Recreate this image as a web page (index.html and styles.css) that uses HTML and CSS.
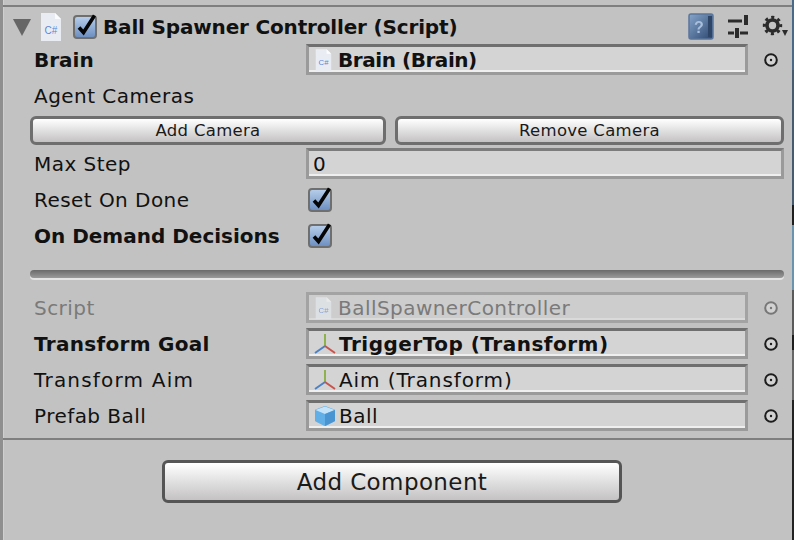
FILE: index.html
```html
<!DOCTYPE html>
<html lang="en">
<head>
  <meta charset="UTF-8">
  <title>Ball Spawner Controller</title>
  <link rel="stylesheet" href="styles.css">
</head>
<body>
  <svg class="defs" width="0" height="0">
    <defs>
      <linearGradient id="checkFill" x1="0" y1="0" x2="0" y2="1">
        <stop offset="0" stop-color="#b9d0ec"/>
        <stop offset="1" stop-color="#6a8dbf"/>
      </linearGradient>
      <linearGradient id="helpFill" x1="0" y1="0" x2="1" y2="1">
        <stop offset="0" stop-color="#86a5cb"/>
        <stop offset="1" stop-color="#2d4770"/>
      </linearGradient>
      <symbol id="check" viewBox="0 0 24 24" overflow="visible">
        <rect x="1" y="1" width="22" height="22" rx="3" fill="url(#checkFill)" stroke="#6f6f6f" stroke-width="2"/>
        <path d="M6 12.5l4.5 5L21.5 0.5" fill="none" stroke="#050505" stroke-width="3.6"/>
      </symbol>
      <symbol id="script" viewBox="0 0 22 28">
        <path d="M1 0h14l6 6v22H1z" fill="#e9edf3"/>
        <path d="M15 0l6 6h-6z" fill="#fbfcfd"/>
        <text x="11" y="21" text-anchor="middle" class="cs">C#</text>
      </symbol>
      <symbol id="dot" viewBox="0 0 14 14">
        <circle cx="7" cy="7" r="5.8" fill="#d2d2d2" stroke="currentColor" stroke-width="2"/>
        <circle cx="7" cy="7" r="1.2" fill="currentColor"/>
      </symbol>
      <symbol id="axes" viewBox="0 0 22 22">
        <path d="M11 13V1" stroke="#8fb24e" stroke-width="2" fill="none"/>
        <path d="M11 13L1 20" stroke="#4a82c4" stroke-width="2" fill="none"/>
        <path d="M11 13l10 7" stroke="#c9524a" stroke-width="2" fill="none"/>
      </symbol>
    </defs>
  </svg>

  <div class="inspector">
    <header class="head">
      <span class="foldout"></span>
      <svg class="head-script"><use href="#script"/></svg>
      <svg class="head-check"><use href="#check"/></svg>
      <h1>Ball Spawner Controller (Script)</h1>
      <svg class="help" viewBox="0 0 26 27">
        <rect x="1" y="1" width="24" height="25" rx="2" fill="url(#helpFill)" stroke="#5b769c" stroke-width="1.5"/>
        <path d="M20 3h4v21h-4z" fill="#2f4568"/>
        <text x="11" y="20" text-anchor="middle" class="qmark">?</text>
      </svg>
      <svg class="sliders" viewBox="0 0 20 23">
        <path d="M0 6h14M0 18h6M12 18h8" stroke="#2b2b2b" stroke-width="3" fill="none"/>
        <path d="M18 0v10M9 13v10" stroke="#2b2b2b" stroke-width="4" fill="none"/>
      </svg>
      <svg class="gear" viewBox="0 0 26 21">
        <circle cx="9.5" cy="9.5" r="5.5" fill="none" stroke="#2b2b2b" stroke-width="3.6"/>
        <circle cx="9.5" cy="9.5" r="8" fill="none" stroke="#2b2b2b" stroke-width="3.4" stroke-dasharray="3 3.28" stroke-dashoffset="1.5"/>
        <path d="M19 14h6l-3 6z" fill="#2b2b2b"/>
      </svg>
    </header>

    <div class="row">
      <label class="bold">Brain</label>
      <div class="field bold brain-value"><svg class="small-script"><use href="#script"/></svg>Brain (Brain)</div>
      <svg class="picker"><use href="#dot"/></svg>
    </div>
    <div class="row"><label>Agent Cameras</label></div>
    <div class="buttons">
      <button>Add Camera</button>
      <button>Remove Camera</button>
    </div>
    <div class="row">
      <label>Max Step</label>
      <div class="field field-wide">0</div>
    </div>
    <div class="row">
      <label>Reset On Done</label>
      <svg class="check"><use href="#check"/></svg>
    </div>
    <div class="row">
      <label class="bold">On Demand Decisions</label>
      <svg class="check"><use href="#check"/></svg>
    </div>

    <div class="divider"></div>

    <div class="row disabled">
      <label>Script</label>
      <div class="field"><svg class="small-script"><use href="#script"/></svg>BallSpawnerController</div>
      <svg class="picker"><use href="#dot"/></svg>
    </div>
    <div class="row">
      <label class="bold goal-label">Transform Goal</label>
      <div class="field bold goal-value"><svg class="axes"><use href="#axes"/></svg>TriggerTop (Transform)</div>
      <svg class="picker"><use href="#dot"/></svg>
    </div>
    <div class="row">
      <label class="aim-label">Transform Aim</label>
      <div class="field aim-value"><svg class="axes"><use href="#axes"/></svg>Aim (Transform)</div>
      <svg class="picker"><use href="#dot"/></svg>
    </div>
    <div class="row">
      <label>Prefab Ball</label>
      <div class="field">
        <svg class="axes" viewBox="0 0 22 22">
          <path d="M11 2l9 3.5v10L11 20l-9-4.500v-10z" fill="#62aee6" stroke="#62aee6" stroke-width="2" stroke-linejoin="round"/>
          <path d="M11 1.500l9.500 3.500-9.500 4-9.500-4z" fill="#c4e3f8"/>
          <path d="M11 9l10-4v11l-10 5z" fill="#4a94d2"/>
        </svg>Ball
      </div>
      <svg class="picker"><use href="#dot"/></svg>
    </div>

    <div class="footer">
      <button class="add">Add Component</button>
    </div>
  </div>
</body>
</html>
```

FILE: styles.css
```css
html, body { margin: 0; padding: 0; height: 100%; overflow: hidden; }
/* the window behind the inspector shows as a thin strip on the right */
body {
  font-family: "DejaVu Sans", sans-serif;
  color: #111;
  background: linear-gradient(#4a6a8a 0, #4a6a8a 70px, #465a70 70px, #465a70 205px, #1e1e1e 205px, #1e1e1e 225px, #6a93b0 225px, #6a93b0 290px, #5a5a5a 290px, #5a5a5a 335px, #1e1e1e 335px, #1e1e1e 350px, #666 350px, #666 400px, #222 400px);
}
.defs { display: block; height: 0; }
svg { overflow: visible; }

.inspector { width: 792px; height: 540px; box-sizing: border-box; background: #c2c2c2; border-left: 3px solid #8f8f8f; box-shadow: inset 1px 0 0 #cfcfcf; padding-top: 5px; letter-spacing: .45px; }
.cs { font: 10px "Liberation Sans", sans-serif; fill: #5b86d6; letter-spacing: 0; }
.qmark { font: bold 16px "Liberation Sans", sans-serif; fill: #a9bfdc; letter-spacing: 0; }

.head { display: flex; align-items: center; height: 37px; box-sizing: border-box; border-top: 2px solid #7f7f7f; padding: 4px 3px 0 10px; letter-spacing: 0; }
.foldout { width: 0; height: 0; border-left: 9px solid transparent; border-right: 9px solid transparent; border-top: 17px solid #666; margin-top: 2px; }
.head-script { width: 22px; height: 28px; margin-left: 9px; }
.head-check { width: 24px; height: 24px; margin-left: 11px; }
.head h1 { font-size: 20px; font-weight: bold; letter-spacing: -.17px; margin: 0 auto 0 6px; white-space: nowrap; }
.help { width: 26px; height: 27px; filter: blur(.5px); }
.sliders { width: 20px; height: 23px; margin-left: 14px; filter: blur(.4px); }
.gear { width: 26px; height: 21px; margin-left: 15px; filter: blur(.4px); }

.row { display: flex; align-items: center; height: 36px; padding-left: 31px; font-size: 20px; }
.row label { width: 272px; flex: none; white-space: nowrap; }
.bold { font-weight: bold; letter-spacing: 0; }
.row .goal-label { letter-spacing: .3px; }
.brain-value { letter-spacing: -.45px; }
.goal-value { letter-spacing: .5px; }
.row .aim-label { letter-spacing: 1.2px; }
.aim-value { letter-spacing: .9px; }
.field { width: 442px; height: 31px; margin-bottom: 1px; flex: none; box-sizing: border-box; display: flex; align-items: center; background: #d4d4d4; border: 3px solid #9a9a9a; border-top-color: #6f6f6f; box-shadow: inset 0 -2px 0 #efefef; padding-left: 7px; white-space: nowrap; }
.field-wide { width: 478px; border-top-color: #7c7c7c; padding-left: 4px; }
.picker { width: 14px; height: 14px; margin-left: 16px; color: #1c1c1c; }
.check { width: 24px; height: 24px; margin-left: 2px; }
.small-script { width: 17px; height: 22px; margin: 0 6px 0 -1px; flex: none; }
.axes { width: 22px; height: 22px; margin: 0 3px 0 -2px; flex: none; }

.disabled { color: #7a7a7a; }
.disabled .field { background: #cdcdcd; border-color: #a3a3a3; box-shadow: inset 0 -2px 0 #dadada; }
.disabled .picker { color: #777; }
.disabled .small-script { opacity: .6; }

button { font-family: inherit; color: #1a1a1a; border: 3px solid #6e6e6e; border-radius: 6px; background: linear-gradient(#fff, #c4c2c2); padding: 0; margin: 0; letter-spacing: .3px; }
.buttons { display: flex; gap: 9px; padding-left: 27px; margin: 2px 0 1px; }
.buttons button { font-size: 16.500px; height: 29px; width: 356px; }
.buttons button + button { width: 389px; }

.divider { height: 8px; margin: 16px 8px 12px 27px; border-radius: 4px; background: linear-gradient(#6a6a6a, #9a9a9a); box-shadow: 0 2px 0 #e4e4e4; }

.footer { border-top: 2px solid #7f7f7f; margin-top: 4px; padding: 20px 0 0 159px; }
.add { width: 460px; height: 43px; font-size: 23px; border-color: #555; letter-spacing: .4px; }
```
